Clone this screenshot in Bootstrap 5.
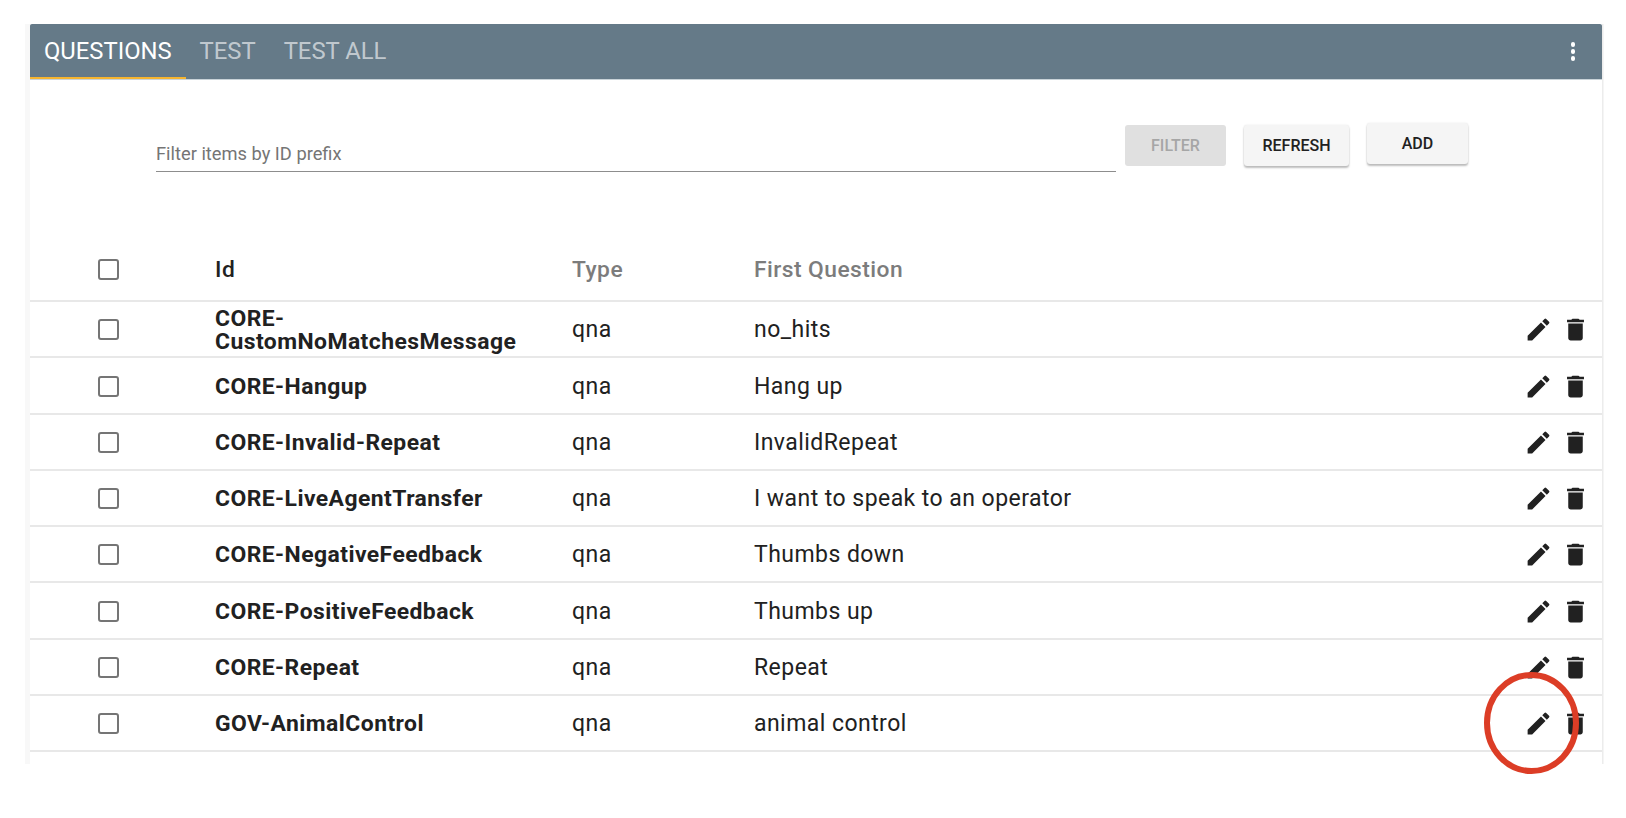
<!DOCTYPE html>
<html lang="en">
<head>
<meta charset="utf-8">
<title>Questions</title>
<link href="https://cdn.jsdelivr.net/npm/bootstrap@5.3.0/dist/css/bootstrap.min.css" rel="stylesheet">
<style>
html,body{height:100%;margin:0;background:#fff;overflow:hidden}
body{font-family:Roboto,"Liberation Sans",sans-serif;color:#212121;position:relative}
.page-wrap{padding:24px 24px 0 30px}
.q-card{height:740px;overflow:hidden;background:#fff;border-radius:2px 2px 0 0}
.q-frame{box-shadow:-5px 0 0 #f8f8f8,-1px 0 0 #ececec,1.5px 0 0 #ececec;clip-path:inset(0 -8px 0 -8px)}
.q-bar{height:55px;background:#657a88;padding-right:27px;box-shadow:0 1px 0 #c9d3d8}
.q-tab{height:55px;padding:0 14px;font-size:23.8px;font-weight:400;line-height:55px;color:rgba(255,255,255,.62);text-transform:uppercase;text-decoration:none;border-bottom:2px solid transparent}
.q-tab.is-on{color:#fff;border-bottom-color:#f6b52f}
.q-kebabs{gap:2.5px}
.q-kebab{width:4.5px;height:4.5px;border-radius:50%;background:#fff}
.q-filter{padding:46px 0 0 126px;height:156px}
.q-input{width:960px;height:47px;border:0;border-bottom:1px solid #8d8d8d;border-radius:0;padding:10px 0 0;font-size:18.3px;font-family:inherit;color:#212121;outline:0;background:transparent}
.q-input::placeholder{color:#757575;opacity:1}
.q-btn{height:41px;border:0;border-radius:3px;background:#f5f5f5;color:#212121;font-size:16px;font-weight:500;padding:0;text-transform:uppercase;box-shadow:0 2px 2px rgba(0,0,0,.25),0 0 2px rgba(0,0,0,.1)}
.q-btn:hover{background:#f5f5f5;color:#212121}
.q-btn.q-off,.q-btn.q-off:disabled{background:#e0e0e0;color:#a6a6a6;box-shadow:none;opacity:1}
.q-w1{width:101px;margin-left:9px}
.q-w2{width:105px;margin-left:18px}
.q-w3{width:101px;margin-left:18px;position:relative;top:-2px}
.q-table{table-layout:fixed;width:100%;margin:0;font-size:23px;letter-spacing:.45px;--bs-table-color:#212121}
.q-table th,.q-table td{padding:1.5px 0 0;vertical-align:middle;border-bottom:2px solid #e8e8e8;line-height:23px}
.q-table thead th{height:66px;font-weight:500;color:#7c7c7c;padding-top:4px;font-size:22.8px}
.q-table thead th.q-dark{color:#212121}
.q-table tbody tr{height:56.25px}
.q-table td.q-id{font-weight:700;font-size:22.9px}
.q-box{display:block;width:21px;height:21px;border:2px solid #757575;border-radius:3px;margin-left:68px;background:#fff}
.q-actions{padding-left:52px;gap:8px}
.q-ico{display:inline-block;fill:#212121;vertical-align:middle}
.q-ring{position:absolute;left:1484px;top:672px;width:95px;height:102px;pointer-events:none}
</style>
</head>
<body>
<div class="page-wrap">
  <div class="q-frame">
  <div class="q-card d-flex flex-column">
    <nav class="q-bar d-flex align-items-center flex-shrink-0">
      <a class="q-tab is-on" href="#">Questions</a>
      <a class="q-tab" href="#">Test</a>
      <a class="q-tab" href="#">Test All</a>
      <div class="ms-auto d-flex flex-column q-kebabs">
        <span class="q-kebab"></span><span class="q-kebab"></span><span class="q-kebab"></span>
      </div>
    </nav>
    <form class="q-filter d-flex align-items-start flex-shrink-0" onsubmit="return false">
      <input class="q-input" type="text" placeholder="Filter items by ID prefix">
      <button class="btn q-btn q-off q-w1" disabled>Filter</button>
      <button class="btn q-btn q-w2">Refresh</button>
      <button class="btn q-btn q-w3">Add</button>
    </form>
    <table class="table q-table">
      <colgroup><col style="width:185px"><col style="width:357px"><col style="width:182px"><col><col style="width:130px"></colgroup>
      <thead>
        <tr>
          <th><span class="q-box"></span></th>
          <th class="q-dark">Id</th>
          <th>Type</th>
          <th>First Question</th>
          <th></th>
        </tr>
      </thead>
      <tbody id="rows">
        <tr><td><span class="q-box"></span></td><td class="q-id">CORE-<br>CustomNoMatchesMessage</td><td>qna</td><td>no_hits</td><td class="q-act"></td></tr>
        <tr><td><span class="q-box"></span></td><td class="q-id">CORE-Hangup</td><td>qna</td><td>Hang up</td><td class="q-act"></td></tr>
        <tr><td><span class="q-box"></span></td><td class="q-id">CORE-Invalid-Repeat</td><td>qna</td><td>InvalidRepeat</td><td class="q-act"></td></tr>
        <tr><td><span class="q-box"></span></td><td class="q-id">CORE-LiveAgentTransfer</td><td>qna</td><td>I want to speak to an operator</td><td class="q-act"></td></tr>
        <tr><td><span class="q-box"></span></td><td class="q-id">CORE-NegativeFeedback</td><td>qna</td><td>Thumbs down</td><td class="q-act"></td></tr>
        <tr><td><span class="q-box"></span></td><td class="q-id">CORE-PositiveFeedback</td><td>qna</td><td>Thumbs up</td><td class="q-act"></td></tr>
        <tr><td><span class="q-box"></span></td><td class="q-id">CORE-Repeat</td><td>qna</td><td>Repeat</td><td class="q-act"></td></tr>
        <tr><td><span class="q-box"></span></td><td class="q-id">GOV-AnimalControl</td><td>qna</td><td>animal control</td><td class="q-act"></td></tr>
        <tr><td></td><td></td><td></td><td></td><td></td></tr>
      </tbody>
    </table>
  </div>
  </div>
</div>
<svg class="q-ring" viewBox="0 0 95 102" aria-hidden="true"><ellipse cx="47.5" cy="51" rx="44.5" ry="48" fill="none" stroke="#dc3d26" stroke-width="6"/></svg>
<script>
document.querySelectorAll('.q-act').forEach(function(td){
  td.innerHTML='<span class="d-flex align-items-center q-actions">'+
  '<svg class="q-ico" width="29" height="29" viewBox="0 0 24 24"><path d="M3 17.25V21h3.75L17.81 9.94l-3.75-3.75L3 17.25zM20.71 7.04a1 1 0 0 0 0-1.41l-2.34-2.34a1 1 0 0 0-1.41 0l-1.83 1.83 3.75 3.75 1.83-1.83z"/></svg>'+
  '<svg class="q-ico" width="29" height="29" viewBox="0 0 24 24"><path d="M6 19c0 1.1.9 2 2 2h8c1.1 0 2-.9 2-2V7H6v12zM19 4h-3.5l-1-1h-5l-1 1H5v2h14V4z"/></svg></span>';
});
</script>
</body>
</html>
